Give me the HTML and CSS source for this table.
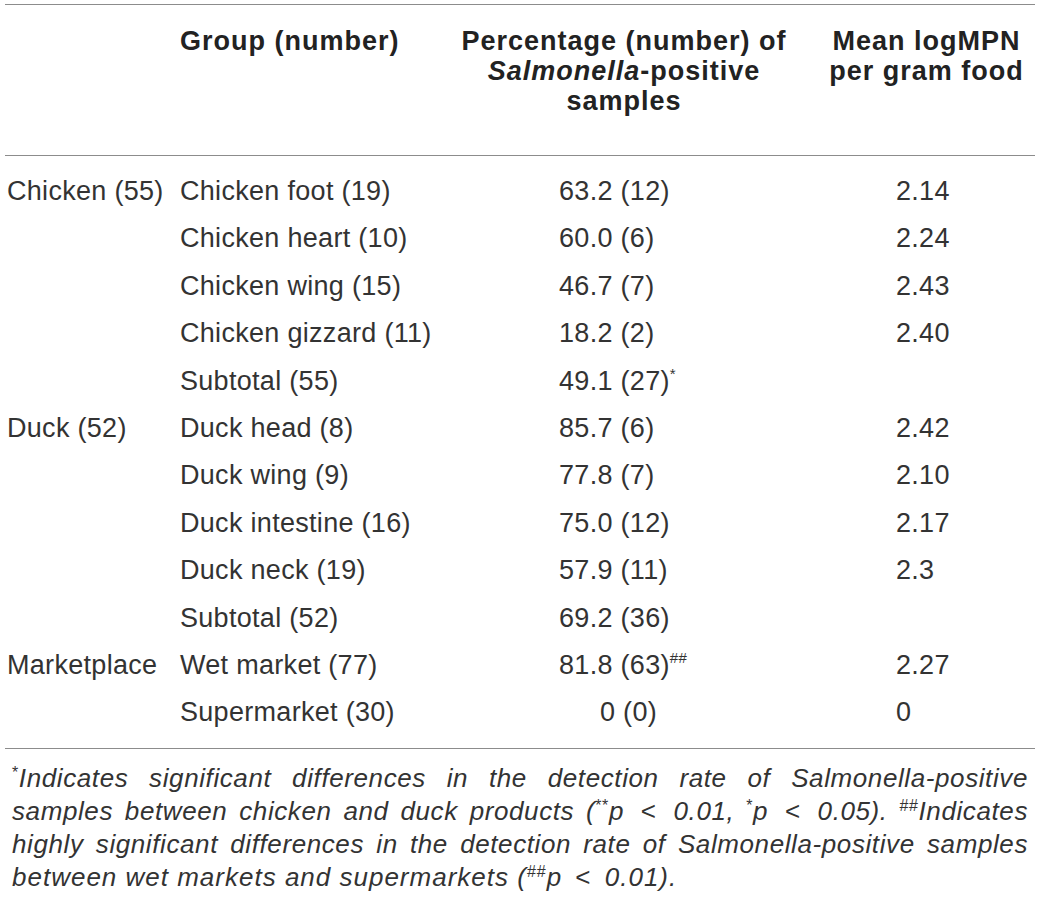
FILE: index.html
```html
<!DOCTYPE html>
<html lang="en">
<head>
  <meta charset="UTF-8">
  <title>Salmonella-positive samples</title>
  <link rel="stylesheet" href="styles.css">
</head>
<body>
  <table class="data">
    <colgroup>
      <col class="c-cat">
      <col class="c-group">
      <col class="c-pct">
      <col class="c-mpn">
    </colgroup>
    <thead>
      <tr>
        <th></th>
        <th class="left">Group (number)</th>
        <th class="pct-head">Percentage (number) of<br><i>Salmonella</i>-positive<br>samples</th>
        <th>Mean logMPN<br>per gram food</th>
      </tr>
    </thead>
    <tbody>
      <tr class="first"><td class="cat">Chicken (55)</td><td class="grp">Chicken foot (19)</td><td class="pct">63.2 (12)</td><td class="mpn">2.14</td></tr>
      <tr><td class="cat"></td><td class="grp">Chicken heart (10)</td><td class="pct">60.0 (6)</td><td class="mpn">2.24</td></tr>
      <tr><td class="cat"></td><td class="grp">Chicken wing (15)</td><td class="pct">46.7 (7)</td><td class="mpn">2.43</td></tr>
      <tr><td class="cat"></td><td class="grp">Chicken gizzard (11)</td><td class="pct">18.2 (2)</td><td class="mpn">2.40</td></tr>
      <tr><td class="cat"></td><td class="grp">Subtotal (55)</td><td class="pct">49.1 (27)<sup>*</sup></td><td class="mpn"></td></tr>
      <tr><td class="cat">Duck (52)</td><td class="grp">Duck head (8)</td><td class="pct">85.7 (6)</td><td class="mpn">2.42</td></tr>
      <tr><td class="cat"></td><td class="grp">Duck wing (9)</td><td class="pct">77.8 (7)</td><td class="mpn">2.10</td></tr>
      <tr><td class="cat"></td><td class="grp">Duck intestine (16)</td><td class="pct">75.0 (12)</td><td class="mpn">2.17</td></tr>
      <tr><td class="cat"></td><td class="grp">Duck neck (19)</td><td class="pct">57.9 (11)</td><td class="mpn">2.3</td></tr>
      <tr><td class="cat"></td><td class="grp">Subtotal (52)</td><td class="pct">69.2 (36)</td><td class="mpn"></td></tr>
      <tr><td class="cat">Marketplace</td><td class="grp">Wet market (77)</td><td class="pct">81.8 (63)<sup>##</sup></td><td class="mpn">2.27</td></tr>
      <tr class="last"><td class="cat"></td><td class="grp">Supermarket (30)</td><td class="pct zero">0 (0)</td><td class="mpn">0</td></tr>
    </tbody>
  </table>

  <p class="note">
    <span class="ln"><sup>*</sup><i>Indicates significant differences in the detection rate of Salmonella-positive</i></span>
    <span class="ln"><i>samples between chicken and duck products (<sup>**</sup>p <span class="op">&lt;</span> 0.01, <sup>*</sup>p <span class="op">&lt;</span> 0.05). <sup>##</sup>Indicates</i></span>
    <span class="ln"><i>highly significant differences in the detection rate of Salmonella-positive samples</i></span>
    <span class="ln tail"><i>between wet markets and supermarkets (<sup>##</sup>p <span class="op">&lt;</span> 0.01).</i></span>
  </p>
</body>
</html>
```

FILE: styles.css
```css
body { margin: 0; padding: 4px 5px 0; background: #fff; color: #333; font-family: "Liberation Sans", Arial, sans-serif; }
.data { width: 1030px; border-collapse: collapse; table-layout: fixed; border-top: 1px solid #8c8c8c; border-bottom: 1px solid #8c8c8c; }
.c-cat { width: 167px; }
.c-group { width: 268px; }
.c-pct { width: 378px; }
.c-mpn { width: 217px; }
th { font-size: 27px; font-weight: bold; letter-spacing: 1px; line-height: 30px; vertical-align: top; text-align: center; padding: 21px 0 39px; color: #222; border-bottom: 1px solid #8c8c8c; white-space: nowrap; }
th.left { text-align: left; padding-left: 8px; }
th.pct-head { padding-right: 10px; padding-left: 0; }
td { font-size: 27px; letter-spacing: 0.3px; line-height: 47.4px; padding: 0; white-space: nowrap; }
tr.first td { padding-top: 12px; }
tr.last td { padding-bottom: 11px; }
td.cat { padding-left: 2px; }
td.grp { padding-left: 8px; }
td.pct { padding-left: 119px; }
td.pct.zero { padding-left: 160px; }
td.mpn { padding-left: 78px; }
td sup { font-size: 15px; line-height: 0; vertical-align: 11px; }
.note { margin: 13px 7px 0; font-size: 26px; letter-spacing: 0.6px; word-spacing: -2px; line-height: 33px; color: #333; }
.ln { display: block; white-space: nowrap; text-align: justify; text-align-last: justify; }
.ln.tail { text-align-last: left; letter-spacing: 1px; word-spacing: 0; }
.op { font-style: normal; margin: 0 5px; }
.note sup { font-size: 16px; font-style: normal; line-height: 0; vertical-align: 9px; }
```
